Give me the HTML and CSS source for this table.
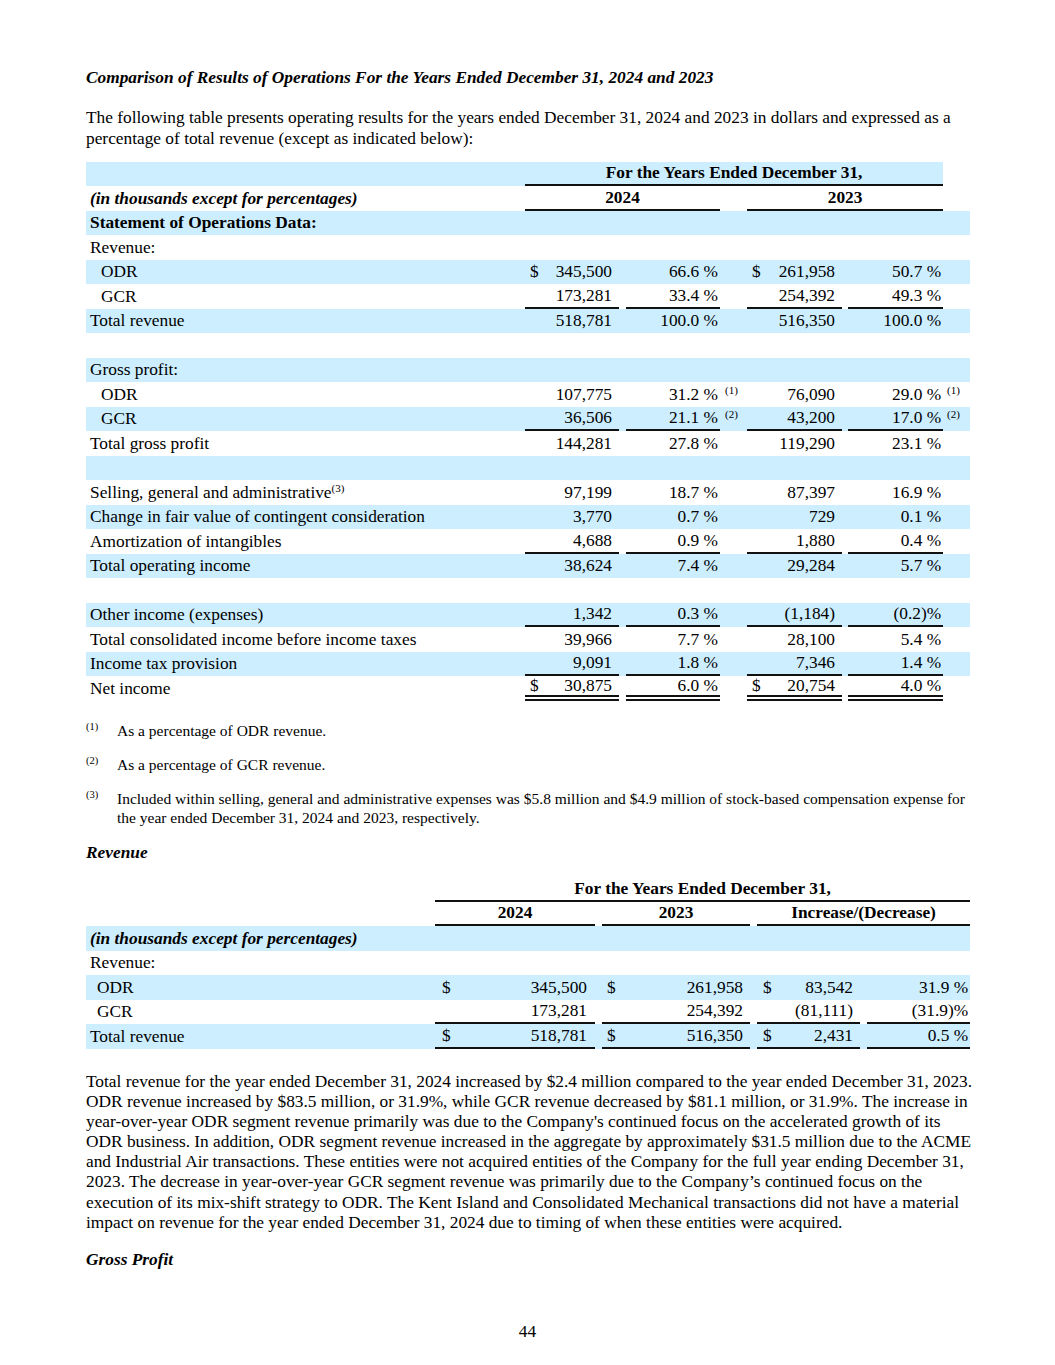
FILE: index.html
```html
<!DOCTYPE html>
<html lang="en">
<head>
<meta charset="utf-8">
<title>Results of Operations</title>
<link rel="stylesheet" href="styles.css">
</head>
<body>
<div class="page">
  <h2 class="heading">Comparison of Results of Operations For the Years Ended December 31, 2024 and 2023</h2>
  <p class="para intro">The following table presents operating results for the years ended December 31, 2024 and 2023 in dollars and expressed as a<br>percentage of total revenue (except as indicated below):</p>

  <table class="fin t1">
    <colgroup>
      <col class="w-label1"><col class="w-94"><col class="w-7"><col class="w-94"><col class="w-27"><col class="w-95"><col class="w-6"><col class="w-95"><col class="w-27">
    </colgroup>
    <tr class="b">
      <td></td>
      <td colspan="7" class="hd ul">For the Years Ended December 31,</td>
      <td class="clear"></td>
    </tr>
    <tr>
      <td class="bi">(in thousands except for percentages)</td>
      <td colspan="3" class="hd ul">2024</td>
      <td></td>
      <td colspan="3" class="hd ul">2023</td>
      <td></td>
    </tr>
    <tr class="b"><td class="bold">Statement of Operations Data:</td><td></td><td></td><td></td><td></td><td></td><td></td><td></td><td></td></tr>
    <tr><td>Revenue:</td><td></td><td></td><td></td><td></td><td></td><td></td><td></td><td></td></tr>
    <tr class="b"><td class="ind">ODR</td><td class="n a1"><span class="cur">$</span>345,500</td><td></td><td class="p">66.6 %</td><td></td><td class="n a1"><span class="cur">$</span>261,958</td><td></td><td class="p">50.7 %</td><td></td></tr>
    <tr><td class="ind">GCR</td><td class="n ul">173,281</td><td></td><td class="p ul">33.4 %</td><td></td><td class="n ul">254,392</td><td></td><td class="p ul">49.3 %</td><td></td></tr>
    <tr class="b"><td>Total revenue</td><td class="n">518,781</td><td></td><td class="p">100.0 %</td><td></td><td class="n">516,350</td><td></td><td class="p">100.0 %</td><td></td></tr>
    <tr><td>&nbsp;</td><td></td><td></td><td></td><td></td><td></td><td></td><td></td><td></td></tr>
    <tr class="b"><td>Gross profit:</td><td></td><td></td><td></td><td></td><td></td><td></td><td></td><td></td></tr>
    <tr><td class="ind">ODR</td><td class="n">107,775</td><td></td><td class="p">31.2 %</td><td class="fn"><sup>(1)</sup></td><td class="n">76,090</td><td></td><td class="p">29.0 %</td><td class="fn"><sup>(1)</sup></td></tr>
    <tr class="b"><td class="ind">GCR</td><td class="n ul">36,506</td><td></td><td class="p ul">21.1 %</td><td class="fn"><sup>(2)</sup></td><td class="n ul">43,200</td><td></td><td class="p ul">17.0 %</td><td class="fn"><sup>(2)</sup></td></tr>
    <tr><td>Total gross profit</td><td class="n">144,281</td><td></td><td class="p">27.8 %</td><td></td><td class="n">119,290</td><td></td><td class="p">23.1 %</td><td></td></tr>
    <tr class="b"><td>&nbsp;</td><td></td><td></td><td></td><td></td><td></td><td></td><td></td><td></td></tr>
    <tr><td>Selling, general and administrative<sup>(3)</sup></td><td class="n">97,199</td><td></td><td class="p">18.7 %</td><td></td><td class="n">87,397</td><td></td><td class="p">16.9 %</td><td></td></tr>
    <tr class="b"><td>Change in fair value of contingent consideration</td><td class="n">3,770</td><td></td><td class="p">0.7 %</td><td></td><td class="n">729</td><td></td><td class="p">0.1 %</td><td></td></tr>
    <tr><td>Amortization of intangibles</td><td class="n ul">4,688</td><td></td><td class="p ul">0.9 %</td><td></td><td class="n ul">1,880</td><td></td><td class="p ul">0.4 %</td><td></td></tr>
    <tr class="b"><td>Total operating income</td><td class="n">38,624</td><td></td><td class="p">7.4 %</td><td></td><td class="n">29,284</td><td></td><td class="p">5.7 %</td><td></td></tr>
    <tr><td>&nbsp;</td><td></td><td></td><td></td><td></td><td></td><td></td><td></td><td></td></tr>
    <tr class="b"><td>Other income (expenses)</td><td class="n ul">1,342</td><td></td><td class="p ul">0.3 %</td><td></td><td class="n ul">(1,184)</td><td></td><td class="p ul">(0.2)%</td><td></td></tr>
    <tr><td>Total consolidated income before income taxes</td><td class="n">39,966</td><td></td><td class="p">7.7 %</td><td></td><td class="n">28,100</td><td></td><td class="p">5.4 %</td><td></td></tr>
    <tr class="b"><td>Income tax provision</td><td class="n ul">9,091</td><td></td><td class="p ul">1.8 %</td><td></td><td class="n ul">7,346</td><td></td><td class="p ul">1.4 %</td><td></td></tr>
    <tr><td>Net income</td><td class="n dbl a1"><span class="cur">$</span>30,875</td><td></td><td class="p dbl">6.0 %</td><td></td><td class="n dbl a1"><span class="cur">$</span>20,754</td><td></td><td class="p dbl">4.0 %</td><td></td></tr>
  </table>

  <div class="notes">
    <div class="note"><span class="mark">(1)</span><span class="ntext">As a percentage of ODR revenue.</span></div>
    <div class="note"><span class="mark">(2)</span><span class="ntext">As a percentage of GCR revenue.</span></div>
    <div class="note"><span class="mark">(3)</span><span class="ntext">Included within selling, general and administrative expenses was $5.8 million and $4.9 million of stock-based compensation expense for<br>the year ended December 31, 2024 and 2023, respectively.</span></div>
  </div>

  <h3 class="heading sub">Revenue</h3>

  <table class="fin t2">
    <colgroup>
      <col class="w-label2"><col class="w-160"><col class="w-7"><col class="w-148"><col class="w-7"><col class="w-103"><col class="w-7"><col class="w-103">
    </colgroup>
    <tr>
      <td></td>
      <td colspan="7" class="hd ul">For the Years Ended December 31,</td>
    </tr>
    <tr>
      <td></td>
      <td class="hd ul">2024</td>
      <td></td>
      <td class="hd ul">2023</td>
      <td></td>
      <td colspan="3" class="hd ul">Increase/(Decrease)</td>
    </tr>
    <tr class="b"><td class="bi">(in thousands except for percentages)</td><td></td><td></td><td></td><td></td><td></td><td></td><td></td></tr>
    <tr><td>Revenue:</td><td></td><td></td><td></td><td></td><td></td><td></td><td></td></tr>
    <tr class="b"><td class="ind2">ODR</td><td class="n2 a2"><span class="cur">$</span>345,500</td><td></td><td class="n a1"><span class="cur">$</span>261,958</td><td></td><td class="n a3"><span class="cur">$</span>83,542</td><td></td><td class="p">31.9 %</td></tr>
    <tr><td class="ind2">GCR</td><td class="n2 ul">173,281</td><td></td><td class="n ul">254,392</td><td></td><td class="n ul">(81,111)</td><td></td><td class="p ul">(31.9)%</td></tr>
    <tr class="b"><td>Total revenue</td><td class="n2 a2 ul"><span class="cur">$</span>518,781</td><td></td><td class="n a1 ul"><span class="cur">$</span>516,350</td><td></td><td class="n a3 ul"><span class="cur">$</span>2,431</td><td></td><td class="p ul">0.5 %</td></tr>
  </table>

  <p class="para body">Total revenue for the year ended December 31, 2024 increased by $2.4 million compared to the year ended December 31, 2023.<br>ODR revenue increased by $83.5 million, or 31.9%, while GCR revenue decreased by $81.1 million, or 31.9%. The increase in<br>year-over-year ODR segment revenue primarily was due to the Company's continued focus on the accelerated growth of its<br>ODR business. In addition, ODR segment revenue increased in the aggregate by approximately $31.5 million due to the ACME<br>and Industrial Air transactions. These entities were not acquired entities of the Company for the full year ending December 31,<br>2023. The decrease in year-over-year GCR segment revenue was primarily due to the Company’s continued focus on the<br>execution of its mix-shift strategy to ODR. The Kent Island and Consolidated Mechanical transactions did not have a material<br>impact on revenue for the year ended December 31, 2024 due to timing of when these entities were acquired.</p>

  <h3 class="heading sub2">Gross Profit</h3>

  <div class="pagenum">44</div>
</div>
</body>
</html>
```

FILE: styles.css
```css
body {
  margin: 0;
  background: #ffffff;
  color: #000000;
  font-family: "Liberation Serif", "Times New Roman", serif;
  font-size: 17.33px;
}

.page {
  width: 884px;
  padding: 68px 0 0 86px;
}

.heading {
  margin: 0;
  font-size: 17.33px;
  line-height: 20px;
  font-weight: bold;
  font-style: italic;
  white-space: nowrap;
}

.para {
  margin: 0;
  font-size: 17.33px;
  white-space: nowrap;
}

.intro {
  margin-top: 18.6px;
  line-height: 21px;
}

.body {
  line-height: 20.15px;
}

.fin {
  width: 884px;
  table-layout: fixed;
  border-collapse: separate;
  border-spacing: 0;
  font-size: 17.33px;
}

.t1 { margin-top: 13px; }
.t2 { margin-top: 14px; }

.fin tr { height: 24.5px; }

.fin td {
  padding: 0;
  line-height: 19px;
  vertical-align: middle;
  white-space: nowrap;
}

.fin td:first-child { padding-left: 4px; }

.fin tr.b td { background: #cceeff; }
.fin tr.b td.clear { background: transparent; }

.w-label1 { width: 439px; }
.w-label2 { width: 349px; }
.w-94 { width: 94px; }
.w-95 { width: 95px; }
.w-7 { width: 7px; }
.w-6 { width: 6px; }
.w-27 { width: 27px; }
.w-160 { width: 160px; }
.w-148 { width: 148px; }
.w-103 { width: 103px; }

.hd {
  text-align: center;
  font-weight: bold;
}

.bold { font-weight: bold; }
.bi { font-weight: bold; font-style: italic; }

.fin td.ind { padding-left: 15px; }
.fin td.ind2 { padding-left: 11px; }

.n { text-align: right; padding-right: 7px !important; }
.n2 { text-align: right; padding-right: 8px !important; }
.p { text-align: right; padding-right: 2px !important; }

.cur { float: left; }
.a1 { padding-left: 5px !important; }
.a2 { padding-left: 7px !important; }
.a3 { padding-left: 6px !important; }

.ul { border-bottom: 2px solid #111; }
.dbl { border-bottom: 6px double #111; }

.fin sup {
  font-size: 11px;
  line-height: 0;
  vertical-align: 6px;
}

.fin td.fn {
  padding-left: 5px;
}
.fin td:last-child.fn { padding-left: 4px; }

.notes {
  margin-top: 20px;
  font-size: 15.5px;
  line-height: 19px;
  white-space: nowrap;
}

.note {
  display: flex;
  margin-bottom: 15px;
}

.mark {
  width: 31px;
  flex: none;
  font-size: 10.5px;
  line-height: 12px;
}

.ntext { flex: 1; }

.sub { margin-top: 16px; }
.t2 + .body { margin-top: 23px; }
.sub2 { margin-top: 17px; }

.pagenum {
  margin-top: 52px;
  text-align: center;
  font-size: 17.33px;
  line-height: 20px;
  margin-left: -86px;
  width: 1055px;
}
```
